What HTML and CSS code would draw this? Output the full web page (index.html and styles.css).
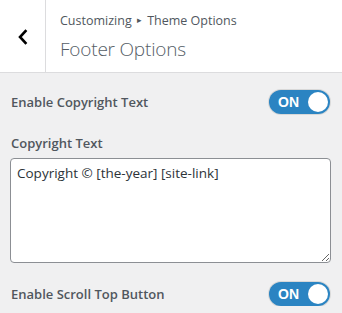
FILE: index.html
```html
<!DOCTYPE html>
<html>
<head>
<meta charset="utf-8">
<link rel="stylesheet" href="styles.css">
</head>
<body>
<div class="header">
  <div class="back">
    <svg width="12" height="16" viewBox="0 0 12 16"><path d="M8.5 2 L3 8 L8.5 14" fill="none" stroke="#000" stroke-width="2.6" stroke-linecap="square"/></svg>
  </div>
  <div class="title">
    <div class="crumb">Customizing <span class="arrow">▸</span> Theme Options</div>
    <div class="section">Footer Options</div>
  </div>
</div>
<div class="content">
  <div class="row first">
    <span class="label">Enable Copyright Text</span>
    <span class="toggle"><span class="on">ON</span><span class="knob"></span></span>
  </div>
  <div class="label field-label">Copyright Text</div>
  <textarea class="text">Copyright © [the-year] [site-link]</textarea>
  <div class="row last">
    <span class="label">Enable Scroll Top Button</span>
    <span class="toggle"><span class="on">ON</span><span class="knob"></span></span>
  </div>
</div>
</body>
</html>
```
FILE: styles.css
```css
html, body {
  margin: 0;
  padding: 0;
  background: #f0f0f1;
  font-family: "Open Sans", "Noto Sans", sans-serif;
}
.header {
  display: flex;
  height: 72px;
  background: #fff;
  border-bottom: 1px solid #dcdcde;
}
.back {
  width: 45px;
  border-right: 1px solid #dcdcde;
  display: flex;
  align-items: center;
  justify-content: center;
}
.back svg { margin-top: 1px; }
.title {
  padding-left: 14px;
  padding-top: 11px;
}
.crumb {
  font-size: 12.5px;
  line-height: 20px;
  color: #50575e;
}
.arrow { font-size: 9px; position: relative; top: -2px; margin: 0 2px; }
.section {
  font-size: 19px;
  font-weight: 300;
  letter-spacing: -0.2px;
  line-height: 28px;
  color: #555d66;
  margin-top: 3px;
}
.content {
  padding: 0 12px 0 10px;
}
.row {
  display: flex;
  justify-content: space-between;
  align-items: center;
}
.row.first { margin-top: 17px; }
.label {
  font-size: 13px;
  font-weight: 600;
  color: #50575e;
  padding-left: 1px;
}
.field-label {
  display: block;
  margin-top: 19px;
  line-height: 20px;
}
.toggle {
  display: flex;
  align-items: center;
  justify-content: space-between;
  box-sizing: border-box;
  width: 61px;
  height: 24px;
  border-radius: 12px;
  background: #2b84c2;
  box-shadow: 0 0 0 1px #d8d8d8;
  padding: 0 2px 0 9px;
}
.on {
  color: #fff;
  font-weight: 700;
  font-size: 14px;
  font-family: "Liberation Sans", Arial, sans-serif;
}
.knob {
  width: 20px;
  height: 20px;
  border-radius: 50%;
  background: #fff;
}
.text {
  display: block;
  box-sizing: border-box;
  width: 321px;
  height: 105px;
  margin-top: 5px;
  border: 1px solid #8c8f94;
  border-radius: 4px;
  padding: 4px 6px;
  font-family: "Open Sans", "Noto Sans", sans-serif;
  font-size: 13.5px;
  line-height: 20px;
  color: #2c3338;
  background: #fff;
  resize: vertical;
}
.row.last { margin-top: 19px; }
```
